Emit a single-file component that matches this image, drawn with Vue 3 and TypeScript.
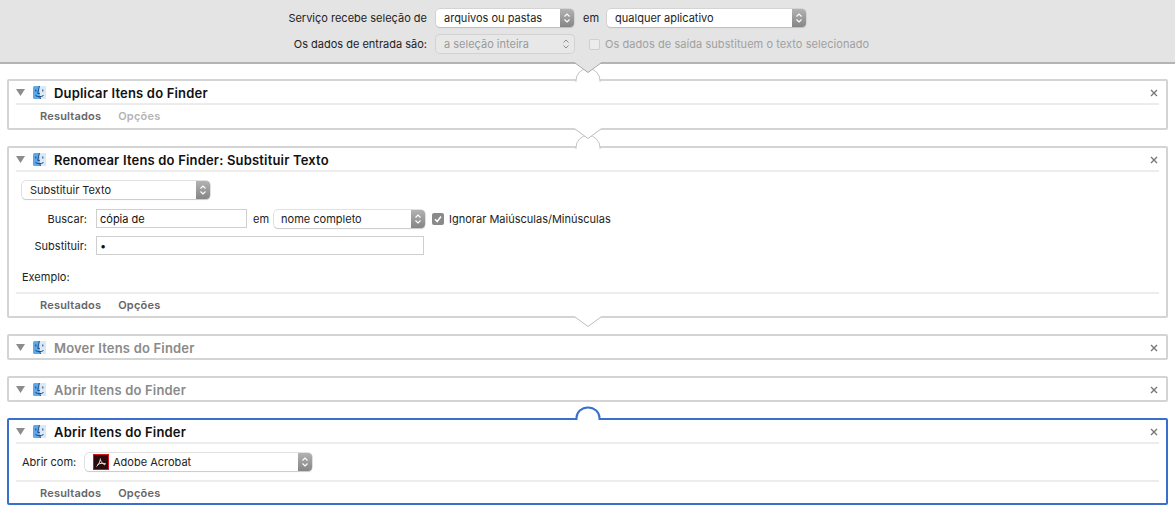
<script setup lang="ts">
interface Card {
  title: string
  kind: 'plain' | 'rename' | 'open' | 'collapsed'
  active?: boolean
  noOptions?: boolean
  bump?: boolean
  notch?: boolean
}

const cards: Card[] = [
  { title: 'Duplicar Itens do Finder', kind: 'plain', noOptions: true, bump: true, notch: true },
  { title: 'Renomear Itens do Finder: Substituir Texto', kind: 'rename', bump: true, notch: true },
  { title: 'Mover Itens do Finder', kind: 'collapsed' },
  { title: 'Abrir Itens do Finder', kind: 'collapsed' },
  { title: 'Abrir Itens do Finder', kind: 'open', active: true }
]
</script>

<template>
  <div class="page">
    <header class="top">
      <div class="top-grid">
        <span class="lbl">Serviço recebe seleção de</span>
        <div class="sel"><span>arquivos ou pastas</span><i class="stepper"><svg width="8" height="12" viewBox="0 0 8 12"><path d="M1.5 4.5 4 2l2.5 2.5M1.5 7.5 4 10l2.5-2.5" fill="none" stroke="#fff" stroke-width="1.1"/></svg></i></div>
        <div class="third">
          <span class="em">em</span>
          <div class="sel wide"><span>qualquer aplicativo</span><i class="stepper"><svg width="8" height="12" viewBox="0 0 8 12"><path d="M1.5 4.5 4 2l2.5 2.5M1.5 7.5 4 10l2.5-2.5" fill="none" stroke="#fff" stroke-width="1.1"/></svg></i></div>
        </div>
        <span class="lbl">Os dados de entrada são:</span>
        <div class="sel off"><span>a seleção inteira</span><i class="stepper"><svg width="8" height="12" viewBox="0 0 8 12"><path d="M1.5 4.5 4 2l2.5 2.5M1.5 7.5 4 10l2.5-2.5" fill="none" stroke="#8f8f8f" stroke-width="1"/></svg></i></div>
        <div class="third off-check">
          <i class="check-off"></i>
          <span>Os dados de saída substituem o texto selecionado</span>
        </div>
      </div>
      <svg class="notch" width="26" height="12" viewBox="0 0 26 12"><path d="M0 0h26v1L13 10.5 0 1z" fill="#e4e4e4"/><path d="M0 1 13 10.5 26 1" fill="none" stroke="#a8a8a8"/></svg>
    </header>

    <div class="list">
      <section v-for="(card, i) in cards" :key="i" class="card" :class="[card.kind, { active: card.active }]">
        <svg v-if="card.bump" class="bump" width="26" height="15" viewBox="0 0 26 15"><path d="M1 13.5A12 12 0 0 1 25 13.5V15H1z" fill="#fff"/><path d="M1 15v-1.5A12 12 0 0 1 25 13.5V15" fill="none" stroke="#c4c4c4"/></svg>
        <svg v-if="card.notch" class="link-v" width="26" height="12" viewBox="0 0 26 12"><path d="M0 0h26v1L13 10.5 0 1z" fill="#fff"/><path d="M0 1 13 10.5 26 1" fill="none" stroke="#bdbdbd"/></svg>
        <svg v-if="card.active" class="bump" width="26" height="15" viewBox="0 0 26 15"><path d="M1.5 15v-3A11.5 11 0 0 1 24.5 12v3z" fill="#fff"/><path d="M1.5 14v-2A11.5 10.5 0 0 1 24.5 12v2" fill="none" stroke="#3a6fd0" stroke-width="2"/></svg>

        <div class="head">
          <svg class="tri" width="9" height="7" viewBox="0 0 9 7"><path d="M0 0h9L4.5 7z" fill="#8c8c8c"/></svg>
          <svg class="finder" width="15" height="15" viewBox="0 0 15 15">
            <rect x="1" y="1" width="13" height="13" rx="1.5" fill="#5aa9ec"/>
            <path d="M7 1h6.5a.5.5 0 0 1 .5.5v12a.5.5 0 0 1-.5.5H8.5C8 11 7.5 9 7.5 7.500z" fill="#dbe9f7"/>
            <path d="M7.5 1C6.8 4 6 6 5.800 8.5h2M8.5 14c-.2-1-.5-1.800-.6-3" fill="none" stroke="#20406f" stroke-width=".9"/>
            <path d="M3.800 4.500v2M10.800 4.500v2M3.500 10.500c2.500 1.600 5.500 1.600 8 0" fill="none" stroke="#20406f" stroke-width="1"/>
          </svg>
          <h2>{{ card.title }}</h2>
          <svg class="close" width="8" height="8" viewBox="0 0 8 8"><path d="M1 1l6 6M7 1 1 7" stroke="#777" stroke-width="1.4"/></svg>
        </div>

        <div v-if="card.kind === 'rename'" class="body rename-body">
          <div class="sel mode"><span>Substituir Texto</span><i class="stepper"><svg width="8" height="12" viewBox="0 0 8 12"><path d="M1.5 4.5 4 2l2.5 2.5M1.5 7.5 4 10l2.5-2.5" fill="none" stroke="#fff" stroke-width="1.1"/></svg></i></div>
          <div class="row find">
            <label>Buscar:</label>
            <div class="input short">cópia de</div>
            <span class="em2">em</span>
            <div class="sel scope"><span>nome completo</span><i class="stepper"><svg width="8" height="12" viewBox="0 0 8 12"><path d="M1.5 4.5 4 2l2.5 2.5M1.5 7.5 4 10l2.5-2.5" fill="none" stroke="#fff" stroke-width="1.1"/></svg></i></div>
            <i class="check-on"><svg width="12" height="12" viewBox="0 0 12 12"><path d="M3 6.200 5.200 8.500 9 3.500" fill="none" stroke="#fff" stroke-width="1.5"/></svg></i>
            <span class="ignore">Ignorar Maiúsculas/Minúsculas</span>
          </div>
          <div class="row swap">
            <label>Substituir:</label>
            <div class="input long">•</div>
          </div>
          <div class="sample">Exemplo:</div>
        </div>

        <div v-if="card.kind === 'open'" class="body open-body">
          <span class="open-lbl">Abrir com:</span>
          <div class="sel app">
            <span class="app-name">
              <svg class="pdf" width="16" height="16" viewBox="0 0 16 16">
                <rect x=".5" y=".5" width="15" height="15" fill="#2a0c0c" stroke="#d6141c"/>
                <path d="M3.5 12.5C5.5 11 7 8 7.5 4.5M4.5 10.5C7.5 9 10.5 9 13 10M7.5 6C8.200 8.300 10 10 12 11" fill="none" stroke="#eadfdf" stroke-width="1"/>
              </svg>
              Adobe Acrobat
            </span>
            <i class="stepper"><svg width="8" height="12" viewBox="0 0 8 12"><path d="M1.5 4.5 4 2l2.5 2.5M1.5 7.5 4 10l2.5-2.5" fill="none" stroke="#fff" stroke-width="1.1"/></svg></i>
          </div>
        </div>

        <div v-if="card.kind !== 'collapsed'" class="foot">
          <span>Resultados</span>
          <span :class="{ dim: card.noOptions }">Opções</span>
        </div>
      </section>
    </div>
  </div>
</template>

<style scoped>
.page {
  width: 1175px;
  height: 517px;
  background: #fff;
  overflow: hidden;
  font-family: Inter, "Liberation Sans", sans-serif;
  font-size: 11px;
  color: #222;
}

.top {
  position: relative;
  z-index: 2;
  height: 64px;
  box-sizing: border-box;
  background: #e4e4e4;
  border-bottom: 2px solid #b4b4b4;
  padding: 9px 0 0 280px;
}

.top-grid {
  display: grid;
  grid-template-columns: 147px 138px auto;
  grid-auto-rows: 18px;
  column-gap: 9px;
  row-gap: 8px;
  align-items: center;
}

.lbl {
  text-align: right;
  white-space: nowrap;
}

.third {
  display: flex;
  align-items: center;
}

.em {
  margin-right: 8px;
}

.notch {
  position: absolute;
  left: 575px;
  top: 100%;
}

.sel {
  display: flex;
  justify-content: space-between;
  align-items: stretch;
  height: 18px;
  box-sizing: border-box;
  background: #fff;
  border-radius: 4px;
  box-shadow: 0 0 0 .5px #c4c4c4, 0 1px 1px rgba(0, 0, 0, .18);
  line-height: 18px;
  padding-left: 8px;
  overflow: hidden;
}

.sel.wide {
  width: 199px;
}

.sel.off {
  background: #e8e8e8;
  color: #9a9a9a;
  box-shadow: 0 0 0 1px #d2d2d2;
}

.stepper {
  display: flex;
  align-items: center;
  justify-content: center;
  width: 14px;
  background: linear-gradient(#b2b2b2, #858585);
}

.off .stepper {
  background: none;
  width: 16px;
}

.off-check {
  margin-left: 6px;
  gap: 5px;
  color: #a0a0a0;
  letter-spacing: .06px;
}

.check-off {
  width: 11px;
  height: 11px;
  box-sizing: border-box;
  background: #ececec;
  border: 1px solid #cfcfcf;
  border-radius: 2px;
}

.list {
  display: flex;
  flex-direction: column;
  gap: 16px;
  padding: 15px 7px 0;
}

.card {
  position: relative;
  box-sizing: border-box;
  border: 2px solid #d4d4d4;
  border-radius: 2px;
  background: #fff;
  padding: 0 7px;
}

.card.plain {
  height: 51px;
}

.card.rename {
  height: 172px;
}

.card.collapsed {
  height: 26px;
}

.card.open {
  height: 87px;
}

.card.active {
  border-color: #3a6fd0;
}

.bump {
  position: absolute;
  left: 566px;
  top: -14px;
}

.link-v {
  position: absolute;
  z-index: 3;
  left: 566px;
  top: 100%;
}

.head {
  display: flex;
  align-items: center;
  height: 24px;
  box-sizing: border-box;
  padding-top: 1px;
  border-bottom: 2px solid #ececec;
}

.collapsed .head {
  border-bottom: 0;
  height: 22px;
}

.tri {
  margin-right: 7px;
}

.finder {
  margin-right: 7px;
}

h2 {
  flex: 1;
  margin: 0;
  font-size: 13px;
  font-weight: 600;
  letter-spacing: .18px;
  color: #111;
  white-space: nowrap;
}

.collapsed h2 {
  color: #8a8a8a;
}

.close {
  margin-right: 1px;
}

.foot {
  display: flex;
  gap: 17px;
  padding-left: 24px;
  height: 22px;
  align-items: center;
  font-weight: 600;
  letter-spacing: .2px;
  color: #666;
}

.foot .dim {
  color: #b4b4b4;
}

.rename .foot,
.open .foot {
  border-top: 2px solid #ececec;
  height: 24px;
  box-sizing: border-box;
}

.rename-body {
  height: 120px;
  padding: 9px 0 0 6px;
  box-sizing: border-box;
}

.sel.mode {
  width: 188px;
}

.row {
  display: flex;
  align-items: center;
  height: 19px;
}

.find {
  margin-top: 10px;
}

.swap {
  margin-top: 8px;
}

.row label {
  width: 65px;
  text-align: right;
  margin-right: 9px;
}

.input {
  box-sizing: border-box;
  height: 19px;
  line-height: 18px;
  padding-left: 3px;
  border: 1px solid #cfcfcf;
  color: #111;
}

.input.short {
  width: 151px;
}

.input.long {
  width: 328px;
}

.em2 {
  margin: 0 5px 0 6px;
}

.sel.scope {
  width: 151px;
  padding-left: 7px;
}

.check-on {
  display: flex;
  align-items: center;
  justify-content: center;
  width: 12px;
  height: 12px;
  margin: 0 5px 0 7px;
  border-radius: 2px;
  background: #8a8a8a;
}

.ignore {
  white-space: nowrap;
}

.sample {
  margin-top: 15px;
}

.open-body {
  display: flex;
  align-items: center;
  height: 36px;
  padding-left: 6px;
}

.open-lbl {
  width: 63px;
}

.sel.app {
  width: 227px;
}

.app-name {
  display: flex;
  align-items: center;
  gap: 4px;
}

.sample,
.open-lbl,
.row label {
  white-space: nowrap;
}
</style>
